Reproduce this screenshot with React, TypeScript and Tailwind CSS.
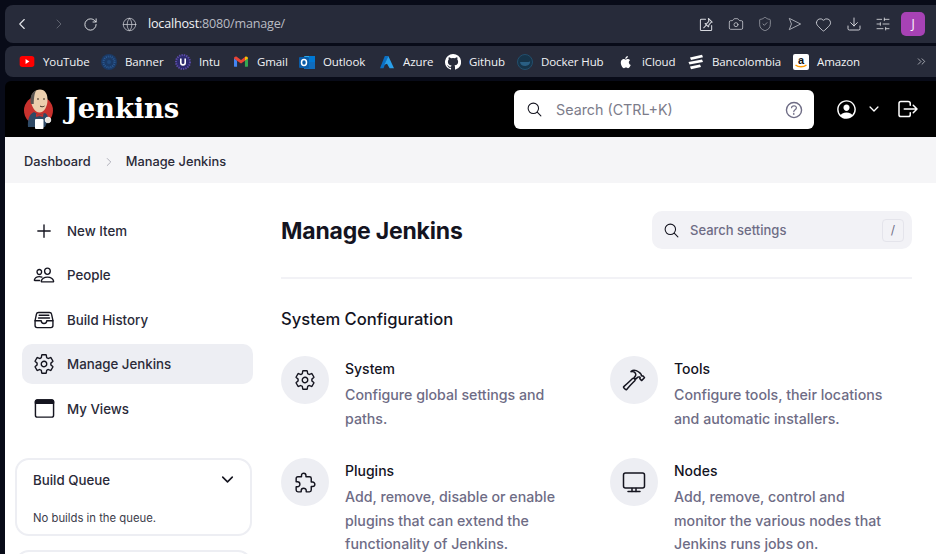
import { ChevronLeft, ChevronRight, ChevronsRight, Camera, Download, Globe, Heart, RotateCw, ShieldCheck, SlidersHorizontal } from "lucide-react";
import {
  IoAddOutline,
  IoChevronDownOutline,
  IoExtensionPuzzleOutline,
  IoFileTrayFullOutline,
  IoHammerOutline,
  IoHelpCircleOutline,
  IoLogOutOutline,
  IoPeopleOutline,
  IoPersonCircleOutline,
  IoSearchOutline,
  IoSettingsOutline,
} from "react-icons/io5";
import type { ReactNode } from "react";

const sans = "font-['Inter',sans-serif]";

function YoutubeIcon() {
  return (
    <svg viewBox="0 0 16 12" className="h-[11px] w-[16px]">
      <rect width="16" height="12" rx="3" fill="#f00" />
      <path d="M6.4 3.4 10.6 6l-4.2 2.6z" fill="#fff" />
    </svg>
  );
}

function BannerIcon() {
  return (
    <svg viewBox="0 0 16 16" className="h-4 w-4">
      <circle cx="8" cy="8" r="8" fill="#1b3a66" />
      <circle cx="8" cy="8" r="5.5" fill="none" stroke="#2b5a94" strokeWidth="2" strokeDasharray="1 1" />
      <circle cx="8" cy="8" r="2" fill="#214a7e" />
    </svg>
  );
}

function IntuIcon() {
  return (
    <svg viewBox="0 0 16 16" className="h-4 w-4">
      <circle cx="8" cy="8" r="7" fill="#2c2a6e" stroke="#5a4aa8" strokeWidth="2" strokeDasharray="1.4 1" />
      <path d="M5.8 4.5v4.2a2.2 2.2 0 0 0 4.4 0V4.5" fill="none" stroke="#fff" strokeWidth="1.6" />
    </svg>
  );
}

function GmailIcon() {
  return (
    <svg viewBox="0 0 16 12" className="h-[11px] w-[14px]">
      <path d="M0 2v9a1 1 0 0 0 1 1h2.500V5z" fill="#4285f4" />
      <path d="M16 2v9a1 1 0 0 1-1 1h-2.500V5z" fill="#34a853" />
      <path d="M0 2.500C0 .5 2 -.4 3.500 .8L8 4.200 12.500 .8V5L8 8.400 3.500 5 0 2.500z" fill="#ea4335" />
      <path d="M12.500 .8C14 -.4 16 .5 16 2.500L12.500 5z" fill="#fbbc04" />
    </svg>
  );
}

function OutlookIcon() {
  return (
    <svg viewBox="0 0 16 16" className="h-4 w-4">
      <rect x="5" y="2" width="11" height="12" rx="1" fill="#28a8ea" />
      <rect x="10" y="2" width="6" height="6" fill="#0078d4" />
      <rect x="5" y="8" width="11" height="7" fill="#0f6cbd" />
      <rect y="3" width="10" height="11" rx="1" fill="#0a5ca8" />
      <ellipse cx="5" cy="8.500" rx="2.500" ry="3" fill="none" stroke="#fff" strokeWidth="1.500" />
    </svg>
  );
}

function AzureIcon() {
  return (
    <svg viewBox="0 0 16 16" className="h-4 w-[14px]">
      <path d="M5.500 1h4L4 15H0z" fill="#0a6fc4" />
      <path d="M9.500 1 16 15h-5L8 10l-3 1z" fill="#2aa0ea" />
    </svg>
  );
}

function GithubIcon() {
  return (
    <svg viewBox="0 0 16 16" className="h-4 w-4" fill="#fff">
      <path d="M8 0a8 8 0 0 0-2.530 15.590c.4.070.55-.170.55-.380v-1.340c-2.230.480-2.700-1.070-2.700-1.070-.360-.930-.890-1.170-.890-1.170-.730-.500.050-.490.050-.490.800.060 1.230.830 1.230.830.710 1.220 1.870.870 2.330.660.070-.520.280-.870.510-1.070-1.780-.200-3.640-.890-3.640-3.950 0-.870.310-1.590.820-2.150-.080-.200-.360-1.020.080-2.120 0 0 .670-.210 2.200.820a7.600 7.600 0 0 1 4 0c1.530-1.040 2.200-.820 2.200-.820.440 1.100.160 1.920.080 2.120.510.560.820 1.270.820 2.150 0 3.070-1.870 3.750-3.650 3.950.290.250.540.730.540 1.480v2.200c0 .210.150.460.550.380A8 8 0 0 0 8 0z" />
    </svg>
  );
}

function DockerIcon() {
  return (
    <svg viewBox="0 0 16 16" className="h-4 w-4">
      <circle cx="8" cy="8" r="7.500" fill="#16344a" stroke="#234f6d" />
      <path d="M3 8h8.500c.5-.5 1.200-.7 1.800-.4-.2 2.500-2 4.400-5 4.400C5 12 3.400 10.500 3 8z" fill="#2a5f84" />
    </svg>
  );
}

function AppleIcon() {
  return (
    <svg viewBox="0 0 16 16" className="h-4 w-[14px]" fill="#fff">
      <path d="M11.200 8.500c0-1.600 1.300-2.400 1.400-2.500-.8-1.100-1.900-1.300-2.400-1.300-1-.1-2 .6-2.500.6s-1.300-.6-2.200-.6C4.300 4.700 3.200 5.400 2.600 6.400c-1.200 2.100-.3 5.200.9 6.900.6.800 1.300 1.800 2.200 1.700.9 0 1.200-.6 2.300-.6s1.400.6 2.300.6 1.500-.8 2.100-1.700c.7-1 1-1.900 1-2-.1 0-2.100-.8-2.200-2.800zM9.400 3.500c.5-.6.800-1.400.7-2.300-.7 0-1.600.5-2.100 1.100-.5.500-.9 1.400-.8 2.200.8.100 1.700-.4 2.200-1z" />
    </svg>
  );
}

function BancolombiaIcon() {
  return (
    <svg viewBox="0 0 16 16" className="h-4 w-4" fill="#fff">
      <path d="M2 3.500 14 .8l1 2.500L3 6z" />
      <path d="M.5 8 14 5.500l1 2.500L1.500 10.500z" />
      <path d="M2 12.500 12 10.500l1 2.500L3 15.200z" />
    </svg>
  );
}

function AmazonIcon() {
  return (
    <svg viewBox="0 0 16 16" className="h-4 w-4">
      <rect width="16" height="16" rx="2" fill="#fff" />
      <text x="8" y="9.500" textAnchor="middle" fontSize="11" fontWeight="700" fontFamily="Liberation Sans, sans-serif" fill="#111">a</text>
      <path d="M2.500 11c3 2.300 8 2.300 11 0" fill="none" stroke="#f90" strokeWidth="1.500" />
    </svg>
  );
}

// rough butler, same proportions as the favicon in the reference
function JenkinsLogo() {
  return (
    <svg viewBox="0 0 30 40" className="h-[40px] w-[30px]">
      <circle cx="14.500" cy="21.500" r="14.500" fill="#c8322e" />
      <path d="M7 11c0-6 4-10.500 9-10.500S24 5 23.500 12c-.3 5-3 11.500-8 11.500C11 23.500 7 17 7 11z" fill="#eccfae" />
      <path d="M7 15C5.500 9 7.500 3 12 1.500c-1.500 3-2 6.500-2.300 13.500z" fill="#5a5552" />
      <path d="M13 10h2M19 10h2M16 17c1.500 1 3 1 4.500 0" stroke="#3a2a20" strokeWidth="1" fill="none" />
      <path d="M4 38c-.5-7 1-13 6-15l5 3 6-2c2 1 3 3 3.500 6L21 38z" fill="#2f4a66" />
      <path d="M12 24.500l3.500 1.800 4-1.800-.5 3.500-3.500-1-3.500 1z" fill="#c8322e" />
      <rect x="11" y="30" width="8.500" height="10" rx="1" fill="#fff" />
      <circle cx="24" cy="31" r="2.800" fill="#e8e2d8" stroke="#fff" strokeWidth=".8" />
    </svg>
  );
}

function PinBoxIcon() {
  return (
    <svg viewBox="0 0 16 16" className="h-[15px] w-[15px]" fill="none" stroke="#d6d8de" strokeWidth="1.100" strokeLinejoin="round" strokeLinecap="round">
      <path d="M7 2.500H2.500a1 1 0 0 0-1 1v10a1 1 0 0 0 1 1h10a1 1 0 0 0 1-1V9" />
      <path d="M10 1.500l4 4-1.500.5-2 2.500-.3 2L6.500 7l2-.3 2-2z" />
      <path d="M8 8.500 5 11.500" />
    </svg>
  );
}

function FlowIcon() {
  return (
    <svg viewBox="0 0 16 16" className="h-[14px] w-[15px]" fill="none" stroke="#a8abb3" strokeWidth="1.100" strokeLinejoin="round">
      <path d="M2 1.500 15 8 2 14.500 4.500 8z" />
    </svg>
  );
}

function ViewsIcon() {
  return (
    <svg viewBox="0 0 22 22" className="h-[21px] w-[21px]" fill="none" stroke="#14141f" strokeWidth="1.500" strokeLinejoin="round">
      <rect x="1.500" y="2" width="19" height="18" rx="2" />
      <path d="M1.500 4a2 2 0 0 1 2-2h15a2 2 0 0 1 2 2v1.500h-19z" fill="#14141f" />
    </svg>
  );
}

function NodesIcon() {
  return (
    <svg viewBox="0 0 24 24" className="h-6 w-6" fill="none" stroke="#14141f" strokeWidth="1.500" strokeLinejoin="round" strokeLinecap="round">
      <rect x="1.500" y="3" width="21" height="15" rx="2" />
      <path d="M6 21.500h12" />
      <path d="M10 18.500v3M14 18.500v3" />
    </svg>
  );
}

function Bookmark({ icon, label, className }: { icon: ReactNode; label: string; className: string }) {
  return (
    <div className={`flex items-center ${className}`}>
      <span className="flex w-4 justify-center">{icon}</span>
      <span className="ml-2 font-['Open_Sans',sans-serif] text-[11.500px] tracking-[-0.1px] text-[#f2f3f6]">{label}</span>
    </div>
  );
}

function NavItem({ icon, label, active }: { icon: ReactNode; label: string; active?: boolean }) {
  return (
    <li className={`flex h-10 items-center rounded-[10px] pl-[11px] ${active ? "bg-[#edeef3]" : ""}`}>
      <span className="flex w-[22px] justify-center text-[#14141f]">{icon}</span>
      <span className="mt-[2px] ml-3 text-[13.300px] font-medium text-[#2a2a38]">{label}</span>
    </li>
  );
}

function ManageCard({ icon, title, desc }: { icon: ReactNode; title: string; desc: string }) {
  return (
    <div className="flex gap-4">
      <div className="flex h-12 w-12 shrink-0 items-center justify-center rounded-full bg-[#edeef3] text-[#14141f]">
        {icon}
      </div>
      <div className="w-[220px]">
        <div className="text-[14px] leading-[25px] font-medium text-[#14141f]">{title}</div>
        <p className="mt-[2px] text-[14.200px] leading-[23.500px] font-medium text-[#6e6c85]">{desc}</p>
      </div>
    </div>
  );
}

export default function App() {
  return (
    <div className={`h-[554px] w-[936px] overflow-hidden bg-[#080b18] pt-[5px] pl-[5px] ${sans}`}>
      <div className="flex h-[38px] items-center rounded-l-[8px] bg-[#272b3a] pr-[11px]">
        <ChevronLeft size={18} strokeWidth={1.500} className="ml-[8px] text-[#e4e6ea]" />
        <ChevronRight size={16} strokeWidth={1.500} className="ml-[20px] text-[#5f636f]" />
        <RotateCw size={15} strokeWidth={1.500} className="ml-[16px] text-[#e4e6ea]" />
        <Globe size={15} strokeWidth={1.100} className="ml-[24px] text-[#d6d8de]" />
        <div className="ml-[11px] font-['Open_Sans',sans-serif] text-[12.600px] tracking-[-0.2px] text-[#f2f3f6]">
          localhost<span className="text-[#b9bbc3]">:8080/manage/</span>
        </div>
        <div className="ml-auto flex items-center gap-[13.500px]">
          <PinBoxIcon />
          <Camera size={16} strokeWidth={1.200} className="text-[#c8cad0]" />
          <ShieldCheck size={16} strokeWidth={1.100} className="text-[#a8abb3]" />
          <FlowIcon />
          <Heart size={17} strokeWidth={1.200} className="text-[#d6d8de]" />
          <Download size={16} strokeWidth={1.300} className="text-[#e4e6ea]" />
          <SlidersHorizontal size={16} strokeWidth={1.200} className="text-[#e4e6ea]" />
        </div>
        <div className="ml-[10px] flex h-6 w-6 items-center justify-center rounded-[5px] bg-[#a742b5] font-['Open_Sans',sans-serif] text-[12px] text-white">
          J
        </div>
      </div>

      <div className="mt-[3px] flex h-[31px] items-center rounded-l-[8px] bg-[#272b3a] pl-[14px]">
        <Bookmark icon={<YoutubeIcon />} label="YouTube" className="w-[82px]" />
        <Bookmark icon={<BannerIcon />} label="Banner" className="w-[74px]" />
        <Bookmark icon={<IntuIcon />} label="Intu" className="w-[58px]" />
        <Bookmark icon={<GmailIcon />} label="Gmail" className="w-[66px]" />
        <Bookmark icon={<OutlookIcon />} label="Outlook" className="w-[80px]" />
        <Bookmark icon={<AzureIcon />} label="Azure" className="w-[66px]" />
        <Bookmark icon={<GithubIcon />} label="Github" className="w-[72px]" />
        <Bookmark icon={<DockerIcon />} label="Docker Hub" className="w-[101px]" />
        <Bookmark icon={<AppleIcon />} label="iCloud" className="w-[70px]" />
        <Bookmark icon={<BancolombiaIcon />} label="Bancolombia" className="w-[105px]" />
        <Bookmark icon={<AmazonIcon />} label="Amazon" className="w-[100px]" />
        <ChevronsRight size={13} strokeWidth={1.300} className="ml-[22px] text-[#d6d8de]" />
      </div>

      <header className="mt-[4px] flex h-[56px] items-center rounded-tl-[6px] bg-black pl-[19px]">
        <JenkinsLogo />
        <span className="ml-[11px] w-[116px] font-['DejaVu_Serif',serif] text-[27.500px] font-bold tracking-[-0.2px] whitespace-nowrap text-white">Jenkins</span>
        <div className="mt-[1px] ml-[333px] flex h-[39px] w-[300px] items-center rounded-[6px] bg-white pr-[9px] pl-[12px]">
          <IoSearchOutline size={17} className="text-[#14141f]" />
          <span className="ml-[13px] text-[14.300px] text-[#7c7c8a]">Search (CTRL+K)</span>
          <IoHelpCircleOutline size={22} className="ml-auto text-[#6e6c85]" />
        </div>
        <IoPersonCircleOutline size={23} className="ml-[21px] text-white" />
        <IoChevronDownOutline size={14} className="ml-[9px] text-white" />
        <IoLogOutOutline size={24} className="ml-[15px] text-white" />
      </header>

      <nav className="flex h-[46px] items-center bg-[#f5f5f7] pt-[3px] pl-[19px] text-[12.800px] font-medium text-[#2a2a38]">
        <span>Dashboard</span>
        <ChevronRight size={14} strokeWidth={1.300} className="mr-[10px] ml-[11px] text-[#9a9aa8]" />
        <span>Manage Jenkins</span>
      </nav>

      <div className="flex bg-white">
        <aside className="w-[276px] shrink-0 pt-[27.500px] pl-[11px]">
          <ul className="ml-[6px] flex w-[231px] flex-col gap-[4.500px]">
            <NavItem icon={<IoAddOutline size={22} />} label="New Item" />
            <NavItem icon={<IoPeopleOutline size={22} />} label="People" />
            <NavItem icon={<IoFileTrayFullOutline size={22} />} label="Build History" />
            <NavItem icon={<IoSettingsOutline size={22} />} label="Manage Jenkins" active />
            <NavItem icon={<ViewsIcon />} label="My Views" />
          </ul>
          <section className="mt-[29.500px] -ml-[1px] h-[78px] w-[237px] rounded-[14px] border-2 border-[#edeef3] pt-[10px] pr-[14px] pl-[16px]">
            <div className="flex items-center justify-between">
              <span className="text-[13.300px] leading-5 font-medium text-[#2a2a38]">Build Queue</span>
              <IoChevronDownOutline size={17} className="-mt-[2px] text-[#14141f]" />
            </div>
            <p className="mt-[20px] text-[11.300px] leading-4 text-[#3c3c4a]">No builds in the queue.</p>
          </section>
          <section className="mt-[14px] -ml-[1px] h-[60px] w-[237px] rounded-[14px] border-2 border-[#edeef3]" />
        </aside>

        <main className="w-[631px] shrink-0 pt-[28px]">
          <div className="flex items-center justify-between">
            <h1 className="mt-[2px] text-[23px] font-bold tracking-[-0.2px] text-[#14141f]">Manage Jenkins</h1>
            <div className="flex h-[38px] w-[260px] items-center rounded-[10px] bg-[#f2f2f6] pr-[8px] pl-[11px]">
              <IoSearchOutline size={17} className="text-[#14141f]" />
              <span className="mt-[2px] ml-[10px] text-[13px] font-medium text-[#6e6c85]">Search settings</span>
              <span className="ml-auto flex h-[23px] w-[22px] items-center justify-center rounded-[4px] border border-[#e4e4eb] text-[12px] text-[#6e6c85]">/</span>
            </div>
          </div>
          <hr className="mt-[28px] border-t-2 border-[#f2f2f6]" />
          <h2 className="mt-[28px] text-[16.600px] leading-6 font-medium text-[#14141f]">System Configuration</h2>
          <div className="mt-[25px] grid grid-cols-[329px_1fr] gap-y-[28px]">
            <ManageCard icon={<IoSettingsOutline size={22} />} title="System" desc="Configure global settings and paths." />
            <ManageCard icon={<IoHammerOutline size={24} />} title="Tools" desc="Configure tools, their locations and automatic installers." />
            <ManageCard icon={<IoExtensionPuzzleOutline size={23} />} title="Plugins" desc="Add, remove, disable or enable plugins that can extend the functionality of Jenkins." />
            <ManageCard icon={<NodesIcon />} title="Nodes" desc="Add, remove, control and monitor the various nodes that Jenkins runs jobs on." />
          </div>
        </main>
      </div>
    </div>
  );
}
